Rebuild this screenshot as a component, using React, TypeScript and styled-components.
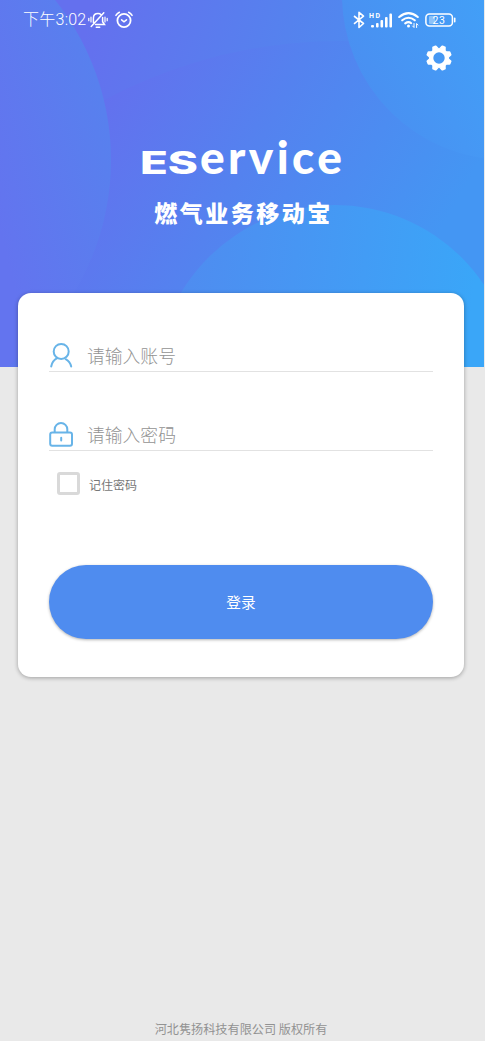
import React from "react";
import styled, { createGlobalStyle } from "styled-components";

const GlobalStyle = createGlobalStyle`
  *, *::before, *::after { box-sizing: border-box; }
  body { margin: 0; background: #e9e9e9; font-family: Roboto, "Noto Sans CJK SC", sans-serif; }
`;

const Screen = styled.main`
  width: 484px;
  height: 1041px;
  display: flex;
  flex-direction: column;
  background: #e9e9e9;
`;

const Hero = styled.header`
  position: relative;
  flex: none;
  height: 367px;
  display: flex;
  flex-direction: column;
  color: #fff;
  overflow: hidden;
`;

const Backdrop = styled.svg`
  position: absolute;
  inset: 0;
`;

const StatusBar = styled.div`
  position: relative;
  display: flex;
  align-items: center;
  height: 40px;
  padding: 0 28px 0 23px;
`;

const Clock = styled.span`
  font: 300 16px/20px Roboto, "Noto Sans CJK SC", sans-serif;
  letter-spacing: 0.25px;
  white-space: nowrap;
  width: 65px;
`;

const StatusIcon = styled.svg<{ $gap?: number }>`
  flex: none;
  margin-left: ${(p) => p.$gap ?? 0}px;
  overflow: visible;
`;

const Spacer = styled.div`
  flex: 1;
`;

const Toolbar = styled.div`
  position: relative;
  display: flex;
  justify-content: flex-end;
  padding: 5px 32px 0 0;
`;

const IconButton = styled.button`
  display: block;
  padding: 0;
  border: 0;
  background: none;
  height: 26px;
`;

const Brand = styled.div`
  position: relative;
  display: flex;
  flex-direction: column;
  align-items: center;
  padding-top: 64px;
`;

const Logo = styled.svg`
  display: block;
  overflow: visible;
`;

const Subtitle = styled.h1`
  margin: 14px 0 0 3px;
  font: 900 23px/34px "Noto Sans CJK SC", sans-serif;
  letter-spacing: 2.5px;
`;

const Card = styled.form`
  position: relative;
  flex: none;
  width: 446px;
  height: 384px;
  margin: -74px 0 0 18px;
  padding: 41px 31px 0;
  border-radius: 13px;
  background: #fff;
  box-shadow: 0 1px 4px rgba(0, 0, 0, 0.32);
`;

const Field = styled.label`
  display: flex;
  align-items: center;
  height: 38px;
  border-bottom: 1px solid #e2e2e2;
  margin-bottom: 41px;
`;

const FieldIcon = styled.svg`
  flex: none;
  width: 24px;
  height: 26px;
  margin-top: 4px;
  fill: none;
  stroke: #68b4e8;
  stroke-width: 2;
  stroke-linecap: round;
`;

const Hint = styled.span`
  margin: 5px 0 0 14px;
  font: 300 17.8px/26px "Noto Sans CJK SC", sans-serif;
  color: #929292;
`;

const Remember = styled.label`
  display: flex;
  align-items: center;
  gap: 9px;
  margin: -20px 0 0 8px;
`;

const Box = styled.span`
  width: 23px;
  height: 23px;
  border: 3px solid #d9d9d9;
  border-radius: 3px;
`;

const RememberText = styled.span`
  padding-top: 2px;
  font: 400 12px/18px "Noto Sans CJK SC", sans-serif;
  color: #777;
`;

const LoginButton = styled.button`
  display: block;
  width: 384px;
  height: 74px;
  margin-top: 70px;
  padding: 0;
  border: 0;
  border-radius: 37px;
  background: #4f8cef;
  color: #fff;
  font: 400 14.7px/22px "Noto Sans CJK SC", sans-serif;
  box-shadow: 0 1px 3px rgba(0, 0, 0, 0.3);
`;

const Footer = styled.footer`
  margin-top: auto;
  padding: 0 2px 3px 0;
  text-align: center;
  font: 400 12.15px/18px "Noto Sans CJK SC", sans-serif;
  color: #929292;
`;

const HeroBackdrop = () => (
  <Backdrop width="484" height="367" viewBox="0 0 484 367">
    <defs>
      <linearGradient id="base" gradientUnits="userSpaceOnUse" x1="60" y1="110" x2="470" y2="240">
        <stop offset="0" stopColor="#6470ee" />
        <stop offset="0.45" stopColor="#5582ee" />
        <stop offset="1" stopColor="#4599f3" />
      </linearGradient>
      <linearGradient id="dome" gradientUnits="userSpaceOnUse" x1="110" y1="70" x2="430" y2="250">
        <stop offset="0" stopColor="#6470ee" />
        <stop offset="0.45" stopColor="#5482ef" />
        <stop offset="1" stopColor="#4496f3" />
      </linearGradient>
      <linearGradient id="left" gradientUnits="userSpaceOnUse" x1="-10" y1="190" x2="115" y2="160">
        <stop offset="0" stopColor="#6374ef" />
        <stop offset="1" stopColor="#5880ee" />
      </linearGradient>
      <linearGradient id="corner" gradientUnits="userSpaceOnUse" x1="345" y1="60" x2="484" y2="0">
        <stop offset="0" stopColor="#4a8ff1" />
        <stop offset="1" stopColor="#429ff7" />
      </linearGradient>
      <linearGradient id="bottom" gradientUnits="userSpaceOnUse" x1="180" y1="280" x2="470" y2="320">
        <stop offset="0" stopColor="#4f8cf0" />
        <stop offset="1" stopColor="#3aa6f8" />
      </linearGradient>
    </defs>
    <rect width="484" height="367" fill="url(#base)" />
    <circle cx="340" cy="541" r="500" fill="url(#dome)" />
    <circle cx="507" cy="-5" r="165" fill="url(#corner)" />
    <circle cx="335" cy="384" r="179" fill="url(#bottom)" />
    <circle cx="-146" cy="160" r="257" fill="url(#left)" />
  </Backdrop>
);

const MutedBell = () => (
  <StatusIcon width="20" height="18" viewBox="0 0 20 18" fill="none" stroke="#fff" strokeWidth="1.5" strokeLinecap="round">
    <path d="M5.4 11.5V7.3Q5.4 2.6 10 2.6Q12 2.6 13 3.7M14.6 6.5V10.7L16.5 13.6H7.5M3.2 15.5L15.8 1.7M8.3 16.3H11.7" />
    <path d="M3 6V11M.8 7.3V9.7M17 6V11M19.2 7.3V9.7" strokeWidth="1.2" />
  </StatusIcon>
);

const Alarm = () => (
  <StatusIcon $gap={7} width="18" height="18" viewBox="0 0 18 18" fill="none" stroke="#fff" strokeWidth="1.8" strokeLinecap="round">
    <circle cx="9" cy="9.5" r="6.6" />
    <path d="M6.6 8.8L9 10.8L11.5 8.8M.9 4.4Q2.1 2.3 4.4 1.2M17.1 4.4Q15.9 2.3 13.6 1.2" strokeWidth="1.5" />
  </StatusIcon>
);

const Bluetooth = () => (
  <StatusIcon width="12" height="18" viewBox="0 0 12 18" fill="none" stroke="#fff" strokeWidth="1.6" strokeLinejoin="round">
    <path d="M1 5L10.5 12.5L6 16.5V1.3L10.5 5.2L1 12.8" />
  </StatusIcon>
);

const Signal = () => (
  <StatusIcon $gap={4} width="24" height="18" viewBox="0 0 24 18" fill="#fff">
    <text x="0" y="7.4" fontFamily="Roboto, sans-serif" fontSize="7" fontWeight="700" textLength="11">
      HD
    </text>
    <rect x="2" y="14" width="3" height="2.5" rx="1" />
    <rect x="7" y="12" width="2.6" height="4.5" rx="1" />
    <rect x="11.5" y="9" width="2.6" height="7.5" rx="1" />
    <rect x="16" y="6" width="2.6" height="10.5" rx="1" />
    <rect x="20.4" y="2.5" width="2.6" height="14" rx="1" />
  </StatusIcon>
);

const Wifi = () => (
  <StatusIcon $gap={5} width="21" height="18" viewBox="0 0 21 18" fill="none" stroke="#fff" strokeWidth="2.1" strokeLinecap="round">
    <path d="M1.2 6Q10.5 -1.7 19.8 6M4.2 9.3Q10.5 4.2 16.8 9.3M7.2 12.4Q10.5 10 13.2 12.2" />
    <circle cx="10.5" cy="15" r="1.5" fill="#fff" stroke="none" />
    <path d="M16 12.5V16.5L14.6 15M18.6 16.5V12.5L20 14" strokeWidth="1" />
  </StatusIcon>
);

const Battery = () => (
  <StatusIcon $gap={6} width="31" height="14" viewBox="0 0 31 14">
    <rect x="4" y="3" width="6" height="8" rx="1" fill="#8dc2f8" />
    <rect x="0.9" y="0.9" width="26.5" height="12.2" rx="3.5" fill="none" stroke="#fff" strokeWidth="1.5" />
    <path d="M29.7 5.4V8.8" stroke="#fff" strokeWidth="1.6" strokeLinecap="round" />
    <text x="14" y="10.8" fill="#fff" textAnchor="middle" fontFamily="Roboto, sans-serif" fontSize="10.5" letterSpacing=".5">
      23
    </text>
  </StatusIcon>
);

const teeth = [22.5, 67.5, 112.5, 157.5, 202.5, 247.5, 292.5, 337.5];

const Gear = () => (
  <svg width="26" height="26" viewBox="-13 -13 26 26">
    <circle r="7.9" fill="none" stroke="#fff" strokeWidth="4.4" />
    {teeth.map((angle) => (
      <path key={angle} d="M-3.5 -9L-2.3 -12.2Q-2 -13 -1.2 -12.9H1.2Q2 -13 2.3 -12.2L3.5 -9Z" fill="#fff" transform={`rotate(${angle})`} />
    ))}
  </svg>
);

export default function App() {
  return (
    <>
      <GlobalStyle />
      <Screen>
        <Hero>
          <HeroBackdrop />
          <StatusBar>
            <Clock>下午3:02</Clock>
            <MutedBell />
            <Alarm />
            <Spacer />
            <Bluetooth />
            <Signal />
            <Wifi />
            <Battery />
          </StatusBar>
          <Toolbar>
            <IconButton type="button" aria-label="设置">
              <Gear />
            </IconButton>
          </Toolbar>
          <Brand>
            <Logo width="200" height="46" viewBox="0 0 200 46" fill="#fff">
              <text x="-2" y="38.5" fontFamily="Inter, sans-serif" fontWeight="800" fontSize="31" textLength="58" lengthAdjust="spacingAndGlyphs">
                ES
              </text>
              <text x="58" y="38.5" fontFamily="Lato, sans-serif" fontWeight="900" fontSize="46" textLength="142" lengthAdjust="spacing">
                ervice
              </text>
            </Logo>
            <Subtitle>燃气业务移动宝</Subtitle>
          </Brand>
        </Hero>
        <Card>
          <Field>
            <FieldIcon viewBox="0 0 24 26">
              <circle cx="12.2" cy="9.4" r="7.5" />
              <path d="M2.2 24.5Q3.3 18.6 8.3 16.2M16.7 17.2Q21 19.6 22.2 24.5" />
            </FieldIcon>
            <Hint>请输入账号</Hint>
          </Field>
          <Field>
            <FieldIcon viewBox="0 0 24 26">
              <rect x="1.2" y="11.5" width="21.8" height="13.2" rx="2" />
              <path d="M5.7 11V8.3A6.3 6.3 0 0 1 18.3 8.3V11M12.2 16.8V19.5" />
            </FieldIcon>
            <Hint>请输入密码</Hint>
          </Field>
          <Remember>
            <Box />
            <RememberText>记住密码</RememberText>
          </Remember>
          <LoginButton type="button">登录</LoginButton>
        </Card>
        <Footer>河北隽扬科技有限公司 版权所有</Footer>
      </Screen>
    </>
  );
}
